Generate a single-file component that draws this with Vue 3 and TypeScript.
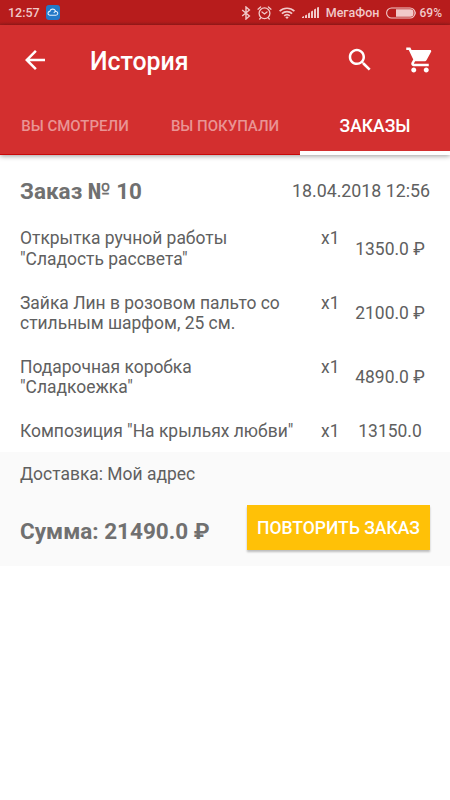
<script setup lang="ts">
interface OrderItem {
  lines: string[]
  qty: number
  price: string
}

const tabs: { label: string; active: boolean }[] = [
  { label: 'ВЫ СМОТРЕЛИ', active: false },
  { label: 'ВЫ ПОКУПАЛИ', active: false },
  { label: 'ЗАКАЗЫ', active: true },
]

const items: OrderItem[] = [
  { lines: ['Открытка ручной работы', '"Сладость рассвета"'], qty: 1, price: '1350.0 ₽' },
  { lines: ['Зайка Лин в розовом пальто со', 'стильным шарфом, 25 см.'], qty: 1, price: '2100.0 ₽' },
  { lines: ['Подарочная коробка', '"Сладкоежка"'], qty: 1, price: '4890.0 ₽' },
  { lines: ['Композиция "На крыльях любви"'], qty: 1, price: '13150.0' },
]
</script>

<template>
  <div class="screen">
    <div class="status">
      <span class="clock">12:57</span>
      <svg class="cloud" width="14" height="15" viewBox="0 0 14 15">
        <rect width="14" height="15" rx="3" fill="#2379c8" />
        <path d="M4 10.2a1.9 1.9 0 0 1-.2-3.8 3 3 0 0 1 5.6-.6M4 10.2h5.9a1.9 1.9 0 1 0-1.8-2.6" fill="none" stroke="#e3effb" stroke-width="1.1" stroke-linecap="round" />
      </svg>
      <span class="spacer"></span>
      <svg class="bt" width="10" height="14" viewBox="0 0 10 14">
        <path d="M1.2 4l7.2 6L5 13V1l3.4 3L1.2 10" fill="none" stroke="currentColor" stroke-width="1.4" />
      </svg>
      <svg class="alarm" width="15" height="14" viewBox="0 0 15 14">
        <g fill="none" stroke="currentColor" stroke-width="1.3" stroke-linecap="round">
          <circle cx="7.5" cy="7.3" r="5.4" />
          <path d="M5 6l2.5 2L10 6M1 3.2L3.6 1M14 3.2L11.4 1M3.7 11.8l-1 1.2M11.3 11.8l1 1.2" />
        </g>
      </svg>
      <svg class="wifi" width="16" height="12" viewBox="0 0 16 12">
        <g fill="none" stroke="currentColor" stroke-width="1.7">
          <path d="M.6 4.2a10.8 10.8 0 0 1 14.8 0" />
          <path d="M2.9 6.6a7.4 7.4 0 0 1 10.2 0" />
          <path d="M5.2 8.9a4.1 4.1 0 0 1 5.6 0" />
        </g>
        <path d="M6.3 10.2a2.5 2.5 0 0 1 3.4 0L8 12z" fill="currentColor" />
      </svg>
      <svg class="signal" width="17" height="11" viewBox="0 0 17 11">
        <path d="M0 11V10L2 9V11zM3 11V8.5L5 7.5V11zM6 11V6.5L8 5.5V11zM9 11V4.5L11 3.5V11zM12 11V2.5L14 1.5V11zM15 11V.5L17 0V11z" fill="currentColor" />
      </svg>
      <span class="carrier">МегаФон</span>
      <svg class="battery" width="31" height="12" viewBox="0 0 31 12">
        <rect x=".6" y="1" width="28.4" height="10" rx="5" fill="none" stroke="currentColor" stroke-width="1.1" />
        <path d="M10 2.3h14.5a3 3 0 0 1 3 3v1.4a3 3 0 0 1-3 3H10z" fill="currentColor" />
        <path d="M29.2 4q1.6 2 0 4z" fill="currentColor" />
      </svg>
      <span class="percent">69%</span>
    </div>

    <header class="header">
      <div class="toolbar">
        <svg class="back" width="30" height="30" viewBox="0 0 24 24"><path fill="#fff" d="M20 11H7.83l5.59-5.59L12 4l-8 8 8 8 1.41-1.41L7.83 13H20v-2z" /></svg>
        <h1>История</h1>
        <svg class="search" width="30" height="30" viewBox="0 0 24 24"><path fill="#fff" d="M15.5 14h-.79l-.28-.27C15.41 12.59 16 11.11 16 9.5 16 5.91 13.09 3 9.5 3S3 5.91 3 9.5 5.91 16 9.5 16c1.61 0 3.09-.59 4.23-1.57l.27.28v.79l5 4.99L20.49 19l-4.99-5zm-6 0C7.01 14 5 11.99 5 9.5S7.01 5 9.5 5 14 7.01 14 9.5 11.99 14 9.5 14z" /></svg>
        <svg width="30" height="30" viewBox="0 0 24 24"><path fill="#fff" d="M7 18c-1.1 0-1.99.9-1.99 2S5.9 22 7 22s2-.9 2-2-.9-2-2-2zM1 2v2h2l3.6 7.59-1.35 2.45c-.16.28-.25.61-.25.96 0 1.1.9 2 2 2h12v-2H7.42c-.14 0-.25-.11-.25-.25l.03-.12.9-1.63h7.45c.75 0 1.41-.41 1.75-1.03l3.58-6.49c.08-.14.12-.31.12-.48 0-.55-.45-1-1-1H5.21l-.94-2H1zm16 16c-1.1 0-1.99.9-1.99 2s.89 2 1.99 2 2-.9 2-2-.9-2-2-2z" /></svg>
      </div>
      <nav class="tabs">
        <div v-for="tab in tabs" :key="tab.label" class="tab" :class="{ active: tab.active }">{{ tab.label }}</div>
      </nav>
    </header>

    <main>
      <div class="order-head">
        <h2>Заказ № 10</h2>
        <span class="date">18.04.2018 12:56</span>
      </div>
      <div class="items">
        <div v-for="item in items" :key="item.lines[0]" class="item">
          <div class="name"><div v-for="line in item.lines" :key="line">{{ line }}</div></div>
          <div class="qty">x{{ item.qty }}</div>
          <div class="price">{{ item.price }}</div>
        </div>
      </div>
      <section class="summary">
        <div class="delivery">Доставка: Мой адрес</div>
        <div class="total-row">
          <strong>Сумма: 21490.0 ₽</strong>
          <button type="button">ПОВТОРИТЬ ЗАКАЗ</button>
        </div>
      </section>
    </main>
  </div>
</template>

<style>
body {
  background: #fff;
}
</style>

<style scoped>
.screen {
  width: 450px;
  height: 800px;
  overflow: hidden;
  background: #fff;
  font-family: Roboto, "Liberation Sans", sans-serif;
  font-size: 17.45px;
  line-height: 20.5px;
  color: #606060;
}
.status {
  display: flex;
  align-items: center;
  height: 25px;
  padding: 0 8px;
  box-sizing: border-box;
  background: linear-gradient(#b71c1c 0 22px, #a31b1b);
  color: #f1c9c9;
  font-size: 12.5px;
  font-weight: 500;
  line-height: 26px;
  white-space: nowrap;
}
.status svg {
  flex: none;
}
.clock {
  width: 31px;
}
.spacer {
  flex: 1;
}
.cloud {
  margin-left: 7px;
}
.alarm {
  margin-left: 6px;
}
.wifi {
  margin-left: 7px;
}
.signal {
  margin-left: 7px;
}
.carrier {
  margin-left: 7px;
}
.battery {
  margin-left: 6px;
}
.percent {
  margin-left: 3px;
  font-size: 12px;
}
.header {
  height: 130px;
  box-sizing: border-box;
  background: linear-gradient(#d32f2f 129px, #c90808 129px);
  box-shadow: 0 1px 5px rgba(0, 0, 0, 0.4);
}
.toolbar {
  display: flex;
  align-items: center;
  height: 70px;
  padding: 0 15px 0 20px;
  box-sizing: border-box;
}
h1 {
  flex: 1;
  margin: 3px 0 0 40px;
  color: #fff;
  font-size: 24.9px;
  font-weight: 500;
  line-height: 30px;
}
.search {
  margin-right: 30px;
}
.tabs {
  display: grid;
  grid-template-columns: repeat(3, 150px);
  grid-template-rows: 60px;
}
.tab {
  box-sizing: border-box;
  height: 60px;
  color: #e99494;
  font-size: 15px;
  font-weight: 500;
  line-height: 62px;
  text-align: center;
  white-space: nowrap;
}
.tab.active {
  color: #fff;
  font-size: 17.5px;
  border-bottom: 4px solid #fff;
}
.order-head {
  display: flex;
  justify-content: space-between;
  align-items: center;
  padding: 21px 20px 0;
  height: 30px;
}
.date {
  font-size: 17.8px;
}
h2,
strong {
  margin: 0;
  color: #707070;
  font-size: 22.5px;
  font-weight: 700;
}
.items {
  display: flex;
  flex-direction: column;
  gap: 23.2px;
  padding: 22.4px 20px 10.5px;
}
.item {
  display: grid;
  grid-template-columns: 290px 40px 80px;
  white-space: nowrap;
}
.qty {
  padding-left: 11px;
}
.price {
  align-self: center;
  text-align: center;
}
.summary {
  height: 114px;
  padding: 12.5px 20px 0;
  box-sizing: border-box;
  background: #fafafa;
}
.total-row {
  display: flex;
  justify-content: space-between;
  align-items: center;
  padding-top: 20px;
}
strong {
  padding-top: 8px;
}
button {
  width: 183px;
  height: 45px;
  padding: 0;
  border: 0;
  background: #ffc107;
  box-shadow: 0 2px 2px rgba(0, 0, 0, 0.25);
  color: #fff;
  font: 500 17.5px/47px Roboto, "Liberation Sans", sans-serif;
  white-space: nowrap;
}
</style>
